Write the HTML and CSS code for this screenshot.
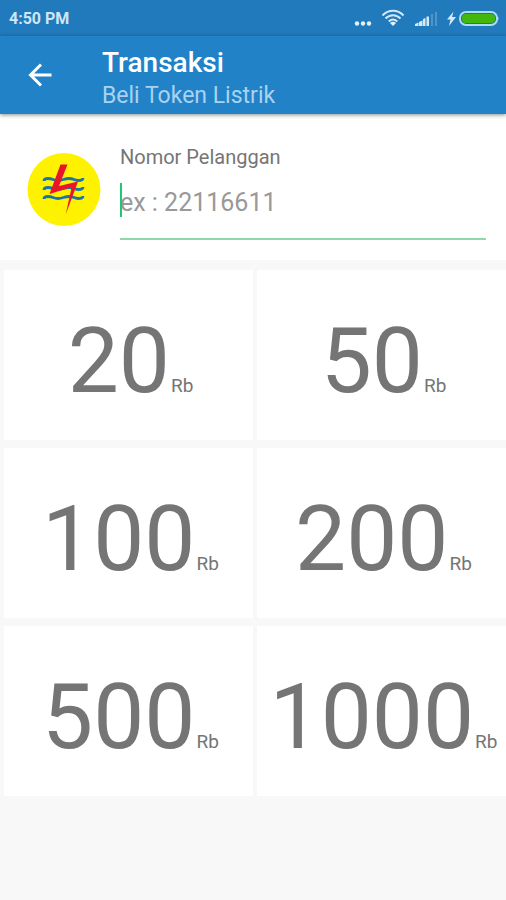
FILE: index.html
```html
<!DOCTYPE html>
<html lang="id">
<head>
  <meta charset="UTF-8">
  <meta name="viewport" content="width=device-width, initial-scale=1.0">
  <title>Beli Token Listrik</title>
  <link rel="stylesheet" href="styles.css">
</head>
<body>

  <!-- Status bar -->
  <div class="status-bar">
    <span class="clock">4:50 PM</span>
    <div class="status-icons">
      <svg width="18" height="20" viewBox="0 0 18 20" fill="#e3f1fb">
        <circle cx="3" cy="15.5" r="2.2"/>
        <circle cx="9" cy="15.5" r="2.2"/>
        <circle cx="15" cy="15.5" r="2.2"/>
      </svg>
      <svg width="24" height="20" viewBox="0 0 24 20" fill="none" stroke="#d3e9f8" stroke-width="2">
        <path d="M1.5 7.5C7.5 1.2 16.5 1.2 22.5 7.5"/>
        <path d="M4.5 10.5c4.5-4.4 10.5-4.4 15 0"/>
        <path d="M7.7 13.5c2.7-2.5 5.900-2.5 8.6 0"/>
        <path d="M12 18l-3-3c1.8-1.6 4.2-1.6 6 0z" fill="#e3f1fb" stroke="none"/>
      </svg>
      <svg width="24" height="20" viewBox="0 0 24 20" fill="#d3e9f8">
        <path d="M1 18v-2l3.500-1.5V18z"/>
        <path d="M5 18v-4l3.5-1.5V18z"/>
        <path d="M9 18v-7l2.5-1v8z"/>
        <path d="M12.5 18V8.5H15V18z"/>
        <path d="M17 18V6h2v12zM21 18V4h2v14z" opacity="0.25"/>
      </svg>
      <svg class="icon-charge" width="9" height="20" viewBox="0 0 9 20" fill="#d3e9f8">
        <path d="M6.5 3.5L0 11.5h3.5L2 18l7-9H5z"/>
      </svg>
      <svg width="40" height="20" viewBox="0 0 40 20">
        <rect x="1" y="4" width="37" height="13" rx="6" fill="#1d6fa6" stroke="#a9dcf5" stroke-width="2"/>
        <path d="M38.5 8q2 2.500 0 5z" fill="#a9dcf5"/>
        <rect x="3" y="6" width="33" height="9" rx="4" fill="#43b70c"/>
      </svg>
    </div>
  </div>

  <!-- App bar -->
  <header class="app-bar">
    <button class="back-button" type="button" aria-label="Kembali">
      <svg width="24" height="24" viewBox="0 0 24 24" fill="none" stroke="#ffffff" stroke-width="3">
        <path d="M23.5 12H3M13 1.5L2.5 12 13 22.5"/>
      </svg>
    </button>
    <div class="titles">
      <h1>Transaksi</h1>
      <p>Beli Token Listrik</p>
    </div>
  </header>

  <!-- Customer number -->
  <section class="customer">
    <svg class="logo" width="74" height="74" viewBox="0 0 74 74">
      <circle cx="37" cy="36.5" r="36.5" fill="#fff200"/>
      <g fill="none" stroke="#1b75a8" stroke-width="2.8">
        <path d="M17 28q0-2.500 4-2.5c5 0 5 2 10 2s6-2 11-2 5 2 9 2q5 0 5-2.5"/>
        <path d="M17 37q0-2.500 4-2.5c5 0 5 2 10 2s6-2 11-2 5 2 9 2q5 0 5-2.5"/>
        <path d="M17 46q0-2.500 4-2.5c5 0 5 2 10 2s6-2 11-2 5 2 9 2q5 0 5-2.5"/>
      </g>
      <path d="M33.5 11.5h7L32 33l19-4.5L38.7 61.5l6-27.5-22.2 7z" fill="#e8152b"/>
    </svg>
    <div class="field">
      <label for="nomor">Nomor Pelanggan</label>
      <div class="input-wrap">
        <input type="text" id="nomor" inputmode="numeric" placeholder="ex : 22116611">
      </div>
    </div>
  </section>

  <!-- Token amounts -->
  <main class="amounts">
    <button class="amount" type="button">20<small>Rb</small></button>
    <button class="amount" type="button">50<small>Rb</small></button>
    <button class="amount" type="button">100<small>Rb</small></button>
    <button class="amount" type="button">200<small>Rb</small></button>
    <button class="amount" type="button">500<small>Rb</small></button>
    <button class="amount" type="button">1000<small>Rb</small></button>
  </main>

</body>
</html>
```
FILE: styles.css
```css
/* General Styles */
* {
  box-sizing: border-box;
}

body {
  margin: 0;
  min-height: 100vh;
  background-color: #f8f8f8;
  color: #757575;
  font-family: Roboto, Arial, sans-serif;
}

button,
input {
  padding: 0;
  border: none;
  background: none;
  font-family: inherit;
}

svg {
  display: block;
}

/* Status Bar */
.status-bar {
  display: flex;
  justify-content: space-between;
  align-items: center;
  height: 36px;
  padding: 0 7px 0 9px;
  background-color: #217abb;
}

.clock {
  color: #cfe6f7;
  font-size: 16px;
  font-weight: bold;
}

.status-icons {
  display: flex;
  align-items: center;
  gap: 9px;
}

.icon-charge {
  margin-right: -6px;
}

/* App Bar */
.app-bar {
  position: relative;
  display: flex;
  align-items: center;
  gap: 50px;
  height: 78px;
  padding: 0 28px;
  background-color: #2182c7;
  box-shadow: 0 1px 4px rgba(0, 0, 0, 0.45);
}

.back-button {
  cursor: pointer;
}

.titles {
  padding-top: 8px;
}

.titles h1 {
  margin: 0;
  color: #ffffff;
  font-size: 28px;
  font-weight: 500;
  line-height: 34px;
}

.titles p {
  margin: 0;
  color: #a9d2f1;
  font-size: 23px;
  line-height: 32px;
}

/* Customer Number */
.customer {
  display: flex;
  align-items: flex-start;
  gap: 19px;
  padding: 30px 20px 20px 27px;
  background-color: #ffffff;
}

.logo {
  flex: none;
  margin-top: 9px;
}

.field {
  flex: 1;
}

.field label {
  display: block;
  font-size: 20px;
  line-height: 26px;
}

.input-wrap {
  position: relative;
  padding: 12px 0 20px;
  border-bottom: 2px solid #8fd8ac;
  margin-top: 4px;
}

/* Text cursor */
.input-wrap::before {
  content: "";
  position: absolute;
  top: 9px;
  left: 0;
  width: 2px;
  height: 34px;
  background-color: #1fc677;
}

.input-wrap input {
  display: block;
  width: 100%;
  height: 32px;
  color: #757575;
  font-size: 25px;
  outline: none;
}

.input-wrap input::placeholder {
  color: #999999;
}

/* Token Amounts */
.amounts {
  display: grid;
  grid-template-columns: 1fr 1fr;
  grid-auto-rows: 170px;
  gap: 8px 4px;
  padding: 10px 0 10px 4px;
}

.amount {
  padding: 36px 0 0 4px;
  background-color: #ffffff;
  color: #757575;
  font-size: 91px;
  line-height: 108px;
  white-space: nowrap;
  cursor: pointer;
}

.amount small {
  margin-left: 1px;
  font-size: 19px;
}
```
